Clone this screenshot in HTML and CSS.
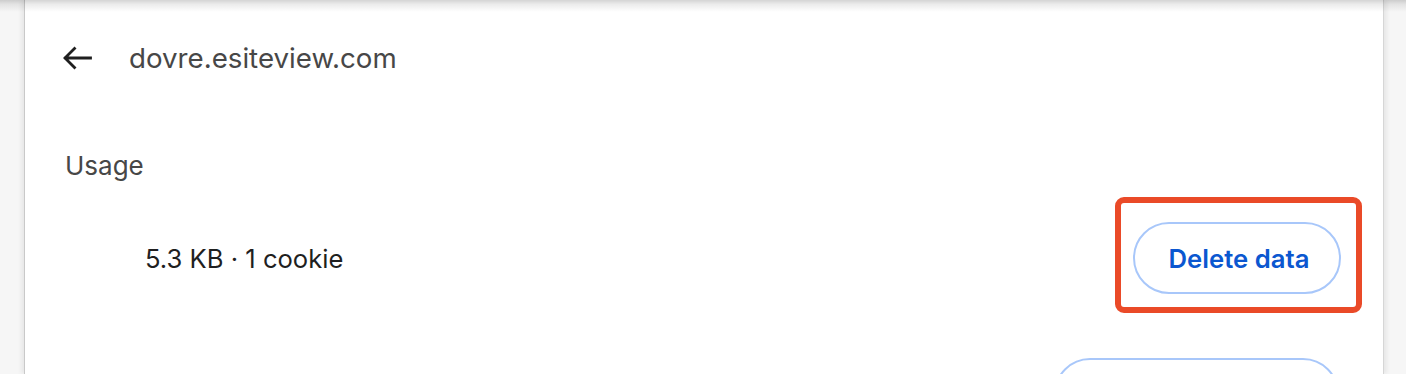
FILE: index.html
```html
<!DOCTYPE html>
<html>
<head>
<meta charset="utf-8">
<link rel="stylesheet" href="styles.css">
</head>
<body>
<div class="page">
  <div class="card">
    <div class="header">
      <svg class="back" width="30" height="24" viewBox="0 0 30 24"><path d="M28.5 12H3.5M12.5 2.5L3 12L12.5 21.5" fill="none" stroke="#1f1f1f" stroke-width="2.8" stroke-linecap="square" stroke-linejoin="miter"/></svg>
      <span class="site">dovre.esiteview.com</span>
    </div>
    <div class="section-title">Usage</div>
    <div class="row">
      <span class="usage">5.3 KB · 1 cookie</span>
      <div class="btn-wrap">
        <button class="pill">Delete data</button>
        <span class="highlight"></span>
      </div>
    </div>
    <div class="row row-next">
      <span></span>
      <button class="pill pill-wide" aria-label="Reset permissions"></button>
    </div>
  </div>
  <div class="top-shadow"></div>
</div>
</body>
</html>
```
FILE: styles.css
```css
html, body {
  margin: 0;
  padding: 0;
  height: 100%;
  overflow: hidden;
}
body {
  background: #f6f6f6;
  font-family: Inter, Roboto, "Liberation Sans", Arial, sans-serif;
}
.page {
  position: relative;
  height: 374px;
  padding: 0 22px 0 24px;
  box-sizing: border-box;
  overflow: hidden;
}
.card {
  background: #fff;
  height: 100%;
  box-sizing: border-box;
  border-left: 1px solid #c9c9c9;
  border-right: 1px solid #d6d6d6;
  box-shadow: -3px 0 4px rgba(0,0,0,0.06), 3px 0 4px rgba(0,0,0,0.06);
  padding: 38px 42px 0 37px;
}
.top-shadow {
  position: absolute;
  left: 0;
  right: 0;
  top: 0;
  height: 12px;
  background: linear-gradient(to bottom, rgba(0,0,0,0.17), rgba(0,0,0,0.08) 35%, rgba(0,0,0,0) 100%);
  pointer-events: none;
}
.header {
  display: flex;
  align-items: center;
  height: 40px;
}
.back {
  display: block;
  margin-right: 37px;
}
.site {
  font-size: 27.7px;
  color: #474747;
}
.section-title {
  margin-top: 73px;
  padding-left: 3px;
  font-size: 26px;
  color: #474747;
  line-height: 30px;
}
.row {
  display: flex;
  align-items: center;
  justify-content: space-between;
  margin-top: 41px;
}
.usage {
  padding-left: 83px;
  font-size: 25.6px;
  color: #1f1f1f;
}
.btn-wrap {
  position: relative;
}
.pill {
  display: block;
  height: 72px;
  width: 208px;
  border: 2px solid #a8c7fa;
  border-radius: 36px;
  background: #fff;
  color: #0b57d0;
  font-family: Inter, Roboto, "Liberation Sans", Arial, sans-serif;
  font-size: 25.7px;
  font-weight: 600;
  padding: 0 0 0 4px;
}
.pill-wide {
  width: 285px;
  margin-right: 2px;
}
.highlight {
  position: absolute;
  left: -18px;
  right: -21px;
  top: -25px;
  bottom: -19px;
  border: 6px solid #ea4a28;
  border-radius: 9px;
  pointer-events: none;
}
.row-next {
  margin-top: 64px;
}
```
